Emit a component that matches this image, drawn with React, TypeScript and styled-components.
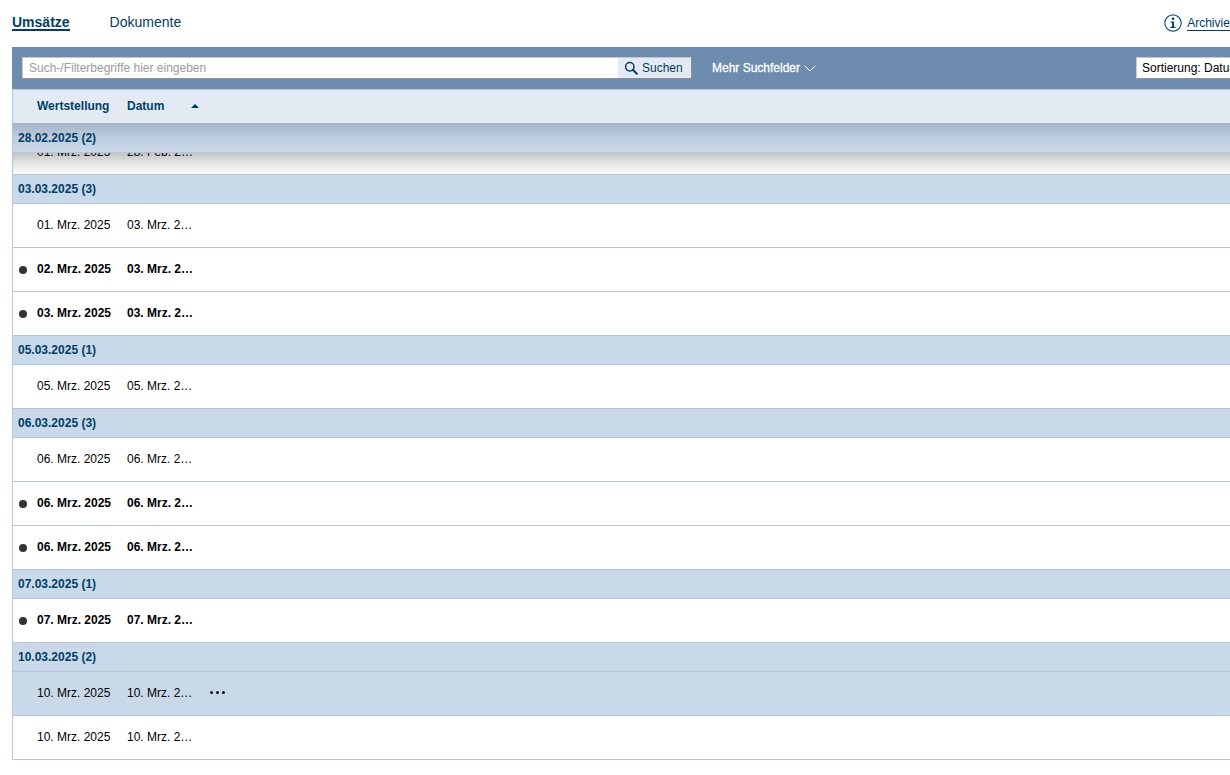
import React from "react";
import styled, { createGlobalStyle } from "styled-components";

const Global = createGlobalStyle`
  html, body { margin: 0; padding: 0; background: #fff; overflow: hidden; }
  body { font-family: "Liberation Sans", Arial, sans-serif; }
`;

const Viewport = styled.div`
  width: 1230px;
  height: 775px;
  overflow: hidden;
`;

const Page = styled.div`
  width: 1360px;
  padding-left: 12px;
  box-sizing: border-box;
`;

const TabBar = styled.div`
  height: 47px;
  display: flex;
  align-items: flex-start;
  padding-top: 15px;
  box-sizing: border-box;
  color: #003e66;
  font-size: 14px;
  line-height: 14px;
`;

const ActiveTab = styled.div`
  font-weight: bold;
  height: 14px;
  line-height: 14px;
  border-bottom: 2px solid #003e66;
  margin-right: 40px;
`;

const Tab = styled.div``;

const ArchiveLink = styled.div`
  margin-left: 983px;
  display: flex;
  align-items: center;
  gap: 5px;
  font-size: 12px;
  margin-top: -1px;
  height: 18px;
`;

const ArchiveText = styled.span`
  line-height: 14px;
  border-bottom: 1px solid #003e66;
`;

const Panel = styled.div`
  width: 1340px;
`;

const Toolbar = styled.div`
  height: 42px;
  background: #6d8cae;
  display: flex;
  align-items: center;
  padding: 0 10px;
`;

const SearchField = styled.div`
  width: 596px;
  height: 22px;
  box-sizing: border-box;
  background: #fff;
  border: 1px solid #8f8f8f;
  border-right: none;
  border-left-color: #c8c8c8;
  border-top-color: #c8c8c8;
  padding-left: 6px;
  font-size: 12px;
  line-height: 20px;
  color: #9b9b9b;
`;

const SearchButton = styled.div`
  width: 74px;
  height: 22px;
  box-sizing: border-box;
  background: #e3eaf4;
  border-right: 1px solid #8f8f8f;
  border-bottom: 1px solid #8f8f8f;
  border-top: 1px solid #c8c8c8;
  display: flex;
  align-items: center;
  padding-left: 6px;
  gap: 4px;
  font-size: 12px;
  color: #003e66;
`;

const MoreFields = styled.div`
  margin-left: 20px;
  width: 424px;
  display: flex;
  align-items: center;
  gap: 4px;
  color: #fff;
  font-size: 12px;
  font-weight: normal;
  -webkit-text-stroke: 0.3px #fff;
`;

const SortBox = styled.div`
  height: 22px;
  width: 180px;
  box-sizing: border-box;
  background: #fff;
  border: 1px solid #8f8f8f;
  border-left-color: #c8c8c8;
  border-top-color: #c8c8c8;
  padding-left: 5px;
  font-size: 12px;
  line-height: 20px;
  color: #000;
  white-space: nowrap;
`;

const Table = styled.div`
  border-left: 1px solid #b4c6dc;
`;

const HeadRow = styled.div`
  height: 35px;
  box-sizing: border-box;
  background: #e3eaf4;
  border-top: 1px solid #b9c9dc;
  border-bottom: 1px solid #a9b9cc;
  border-left: 1px solid #b4c6dc;
  display: flex;
  align-items: center;
  color: #003e66;
  font-size: 12px;
  font-weight: bold;
  padding: 0 0 2px 24px;
`;

const HeadCell = styled.div<{ $w: number }>`
  width: ${(p) => p.$w}px;
`;

const SortMark = styled.svg`
  display: block;
`;

const GroupRow = styled.div<{ $stuck?: boolean }>`
  height: 28px;
  background: ${(p) =>
    p.$stuck
      ? "linear-gradient(to bottom, #a7b5c8 0%, #bccbdd 45%, #c9d9ea 100%)"
      : "#c9d9ea"};
  border-bottom: 1px solid #b4c6dc;
  padding-left: 5px;
  font-size: 12px;
  font-weight: bold;
  line-height: 28px;
  color: #003e66;
`;

const Row = styled.div<{ $selected?: boolean; $unread?: boolean; $clear?: boolean }>`
  height: 44px;
  box-sizing: border-box;
  padding-bottom: 2px;
  border-bottom: 1px solid #b9c6d6;
  background: ${(p) => (p.$clear ? "transparent" : p.$selected ? "#c9d9ea" : "#fff")};
  display: flex;
  align-items: center;
  font-size: 12px;
  font-weight: ${(p) => (p.$unread ? "bold" : "normal")};
  color: #000;
`;

const DotCell = styled.div`
  width: 24px;
  display: flex;
  justify-content: flex-start;
  padding-left: 6px;
  box-sizing: border-box;
`;

const Dot = styled.span`
  width: 8px;
  height: 8px;
  margin-top: 2px;
  border-radius: 50%;
  background: #333;
`;

const DateCell = styled.div<{ $w: number }>`
  width: ${(p) => p.$w}px;
  white-space: nowrap;
  overflow: hidden;
  text-overflow: ellipsis;
`;

const More = styled.div`
  margin-left: 16px;
  display: flex;
  gap: 3px;
`;

const MoreDot = styled.span`
  width: 3px;
  height: 3px;
  border-radius: 50%;
  background: #111;
`;

const ClippedRow = styled.div`
  height: 22px;
  overflow: hidden;
  background: linear-gradient(to bottom, #c4c4c4 0%, #e6e6e6 50%, #ffffff 100%);
`;

const ClippedInner = styled.div`
  margin-top: -22px;
`;

type R = { a: string; b: string; unread?: boolean; selected?: boolean; clear?: boolean };
type G = { title: string; rows: R[] };

const groups: G[] = [
  {
    title: "03.03.2025 (3)",
    rows: [
      { a: "01. Mrz. 2025", b: "03. Mrz. 2025" },
      { a: "02. Mrz. 2025", b: "03. Mrz. 2025", unread: true },
      { a: "03. Mrz. 2025", b: "03. Mrz. 2025", unread: true },
    ],
  },
  { title: "05.03.2025 (1)", rows: [{ a: "05. Mrz. 2025", b: "05. Mrz. 2025" }] },
  {
    title: "06.03.2025 (3)",
    rows: [
      { a: "06. Mrz. 2025", b: "06. Mrz. 2025" },
      { a: "06. Mrz. 2025", b: "06. Mrz. 2025", unread: true },
      { a: "06. Mrz. 2025", b: "06. Mrz. 2025", unread: true },
    ],
  },
  { title: "07.03.2025 (1)", rows: [{ a: "07. Mrz. 2025", b: "07. Mrz. 2025", unread: true }] },
  {
    title: "10.03.2025 (2)",
    rows: [
      { a: "10. Mrz. 2025", b: "10. Mrz. 2025", selected: true },
      { a: "10. Mrz. 2025", b: "10. Mrz. 2025" },
    ],
  },
];

const TxRow = ({ a, b, unread, selected, clear }: R) => (
  <Row $unread={unread} $selected={selected} $clear={clear}>
    <DotCell>{unread && <Dot />}</DotCell>
    <DateCell $w={90}>{a}</DateCell>
    <DateCell $w={67}>{b}</DateCell>
    {selected && (
      <More>
        <MoreDot />
        <MoreDot />
        <MoreDot />
      </More>
    )}
  </Row>
);

export default function App() {
  return (
    <Viewport>
      <Global />
      <Page>
        <TabBar>
          <ActiveTab>Umsätze</ActiveTab>
          <Tab>Dokumente</Tab>
          <ArchiveLink>
            <svg width="18" height="18" viewBox="0 0 18 18" fill="none">
              <circle cx="9" cy="9" r="8.2" stroke="#1f5a80" strokeWidth="1.2" />
              <circle cx="9" cy="4.8" r="1.3" fill="#003e66" />
              <path d="M6.6 7.4h3.4v5.4h1.6v1.3H6.4v-1.3h1.7V8.7H6.6z" fill="#003e66" />
            </svg>
            <ArchiveText>Archivierte Umsätze</ArchiveText>
          </ArchiveLink>
        </TabBar>
        <Panel>
          <Toolbar>
            <SearchField>Such-/Filterbegriffe hier eingeben</SearchField>
            <SearchButton>
              <svg width="14" height="14" viewBox="0 0 14 14" fill="none">
                <circle cx="5.8" cy="5.8" r="4.2" stroke="#003e66" strokeWidth="1.5" />
                <path d="M9 9l3.8 3.8" stroke="#003e66" strokeWidth="2" strokeLinecap="round" />
              </svg>
              Suchen
            </SearchButton>
            <MoreFields>
              Mehr Suchfelder
              <svg width="12" height="7" viewBox="0 0 12 7" fill="none">
                <path d="M.7.8L6 6l5.3-5.2" stroke="#fff" strokeWidth="1" />
              </svg>
            </MoreFields>
            <SortBox>Sortierung: Datum absteigend</SortBox>
          </Toolbar>
          <HeadRow>
            <HeadCell $w={90}>Wertstellung</HeadCell>
            <HeadCell $w={64}>Datum</HeadCell>
            <SortMark width="8" height="4" viewBox="0 0 8 4">
              <path d="M0 4L4 0l4 4z" fill="#003e66" />
            </SortMark>
          </HeadRow>
          <Table>
            <GroupRow $stuck>28.02.2025 (2)</GroupRow>
            <ClippedRow>
              <ClippedInner>
                <TxRow a="01. Mrz. 2025" b="28. Feb. 2025" clear />
              </ClippedInner>
            </ClippedRow>
            {groups.map((g) => (
              <React.Fragment key={g.title}>
                <GroupRow>{g.title}</GroupRow>
                {g.rows.map((r, i) => (
                  <TxRow key={i} {...r} />
                ))}
              </React.Fragment>
            ))}
          </Table>
        </Panel>
      </Page>
    </Viewport>
  );
}
